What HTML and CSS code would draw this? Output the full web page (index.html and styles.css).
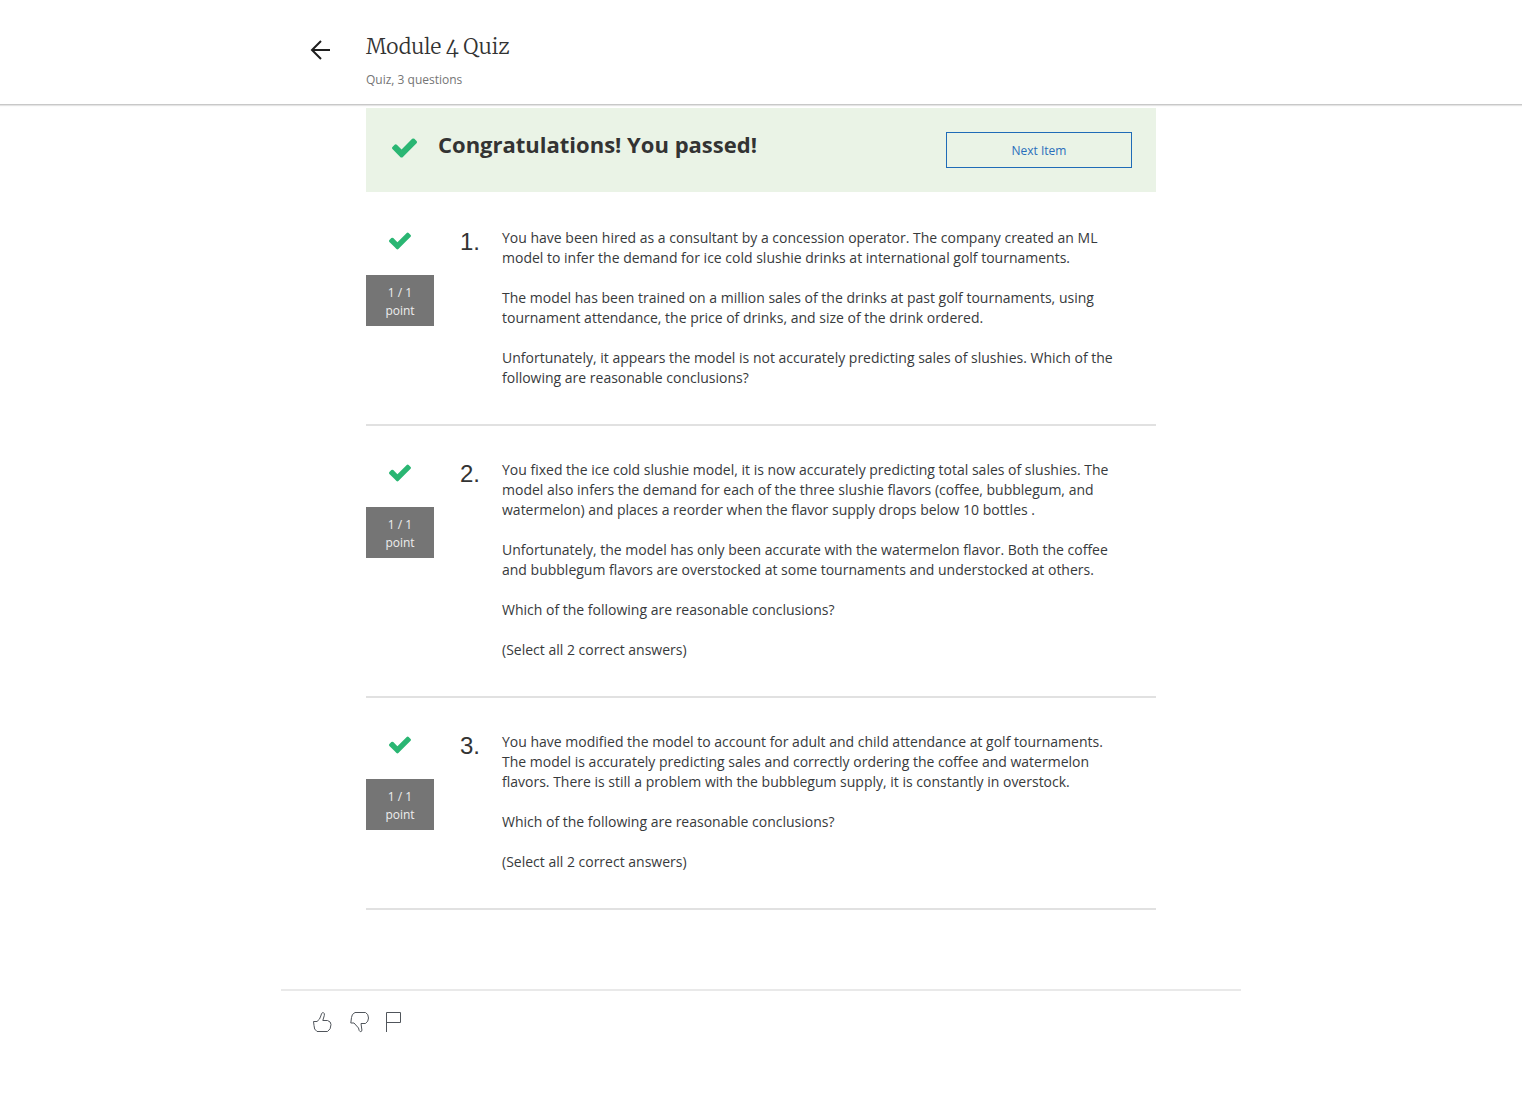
FILE: index.html
```html
<!DOCTYPE html>
<html lang="en">
<head>
<meta charset="utf-8">
<meta name="viewport" content="width=device-width, initial-scale=1">
<title>Module 4 Quiz</title>
<link rel="stylesheet" href="styles.css">
</head>
<body>
<svg width="0" height="0" class="sprite" aria-hidden="true">
  <symbol id="check" viewBox="121 334 1550 1188">
    <path fill="#2ab673" d="M1671 566q0 40-28 68l-724 724-136 136q-28 28-68 28t-68-28l-136-136-362-362q-28-28-28-68t28-68l136-136q28-28 68-28t68 28l294 295 656-657q28-28 68-28t68 28l136 136q28 28 28 68z"/>
  </symbol>
</svg>
<header class="topbar">
  <div class="topbar-inner">
    <a class="back" href="#" aria-label="Back">
      <svg width="20" height="20" viewBox="0 0 20 20" fill="none" stroke="#1f1f1f" stroke-width="2"><path d="M20 10H2M11 1 2 10l9 9"/></svg>
    </a>
    <div>
      <h1 class="title">Module 4 Quiz</h1>
      <p class="subtitle">Quiz, 3 questions</p>
    </div>
  </div>
</header>
<main class="content">
  <section class="banner">
    <svg class="banner-check" aria-hidden="true"><use href="#check"/></svg>
    <h2 class="banner-title">Congratulations! You passed!</h2>
    <button class="next" type="button">Next Item</button>
  </section>

  <article class="question">
    <div class="score">
      <svg class="check" aria-hidden="true"><use href="#check"/></svg>
      <div class="badge">1 / 1<br>point</div>
    </div>
    <div class="number">1.</div>
    <div class="prompt">
      <p>You have been hired as a consultant by a concession operator. The company created an ML model to infer the demand for ice cold slushie drinks at international golf tournaments.</p>
      <p>The model has been trained on a million sales of the drinks at past golf tournaments, using tournament attendance, the price of drinks, and size of the drink ordered.</p>
      <p>Unfortunately, it appears the model is not accurately predicting sales of slushies. Which of the following are reasonable conclusions?</p>
    </div>
  </article>

  <article class="question">
    <div class="score">
      <svg class="check" aria-hidden="true"><use href="#check"/></svg>
      <div class="badge">1 / 1<br>point</div>
    </div>
    <div class="number">2.</div>
    <div class="prompt">
      <p>You fixed the ice cold slushie model, it is now accurately predicting total sales of slushies. The model also infers the demand for each of the three slushie flavors (coffee, bubblegum, and watermelon) and places a reorder when the flavor supply drops below 10 bottles .</p>
      <p>Unfortunately, the model has only been accurate with the watermelon flavor. Both the coffee and bubblegum flavors are overstocked at some tournaments and understocked at others.</p>
      <p>Which of the following are reasonable conclusions?</p>
      <p>(Select all 2 correct answers)</p>
    </div>
  </article>

  <article class="question">
    <div class="score">
      <svg class="check" aria-hidden="true"><use href="#check"/></svg>
      <div class="badge">1 / 1<br>point</div>
    </div>
    <div class="number">3.</div>
    <div class="prompt">
      <p>You have modified the model to account for adult and child attendance at golf tournaments. The model is accurately predicting sales and correctly ordering the coffee and watermelon flavors. There is still a problem with the bubblegum supply, it is constantly in overstock.</p>
      <p>Which of the following are reasonable conclusions?</p>
      <p>(Select all 2 correct answers)</p>
    </div>
  </article>
</main>
<footer class="feedback">
  <button class="icon-button" type="button" aria-label="Like">
    <svg width="20" height="22" viewBox="0 0 20 22"><path d="M1.500 10.500H5Q8 8.500 8.800 5L9.500 2.800Q10.200 1.200 11.500 1.700 12.800 2.300 12.300 4.500L10.800 9.500H15.500Q19 10.500 19 13.500 19 18.500 15.500 20.500H5Q1.800 18.500 2 14.500Z"/></svg>
  </button>
  <button class="icon-button" type="button" aria-label="Dislike">
    <svg width="20" height="22" viewBox="0 0 20 22"><path d="M1.800 12H5L9.500 17 10.200 19.500Q11.200 21.500 12.500 20.300 13.300 19.500 12.600 17L12 12.500H16.500Q19.500 10.500 19.500 7 19.500 3 16.500 1.500H6Q2.600 3 2.500 6.500Z"/></svg>
  </button>
  <button class="icon-button" type="button" aria-label="Flag">
    <svg width="20" height="22" viewBox="0 0 20 22"><path d="M.5 21V1.500H14.500V11.500H.5"/></svg>
  </button>
</footer>
</body>
</html>
```
FILE: styles.css
```css
* { box-sizing: border-box; }

body {
  margin: 0;
  background: #fff;
  color: #373a3c;
  font: 14px/20px "Open Sans", sans-serif;
}

h1, h2, p { margin: 0; }

.sprite { position: absolute; }

.topbar {
  padding: 33px 24px 15px;
  border-bottom: 1px solid #c8c8c8;
  box-shadow: 0 1px 1px #e4e4e4;
}

.topbar-inner {
  display: flex;
  gap: 36px;
  max-width: 902px;
  margin: 0 auto;
}

.back {
  display: block;
  width: 20px;
  height: 20px;
  margin-top: 7px;
}

.back svg { display: block; }

.title {
  color: #333;
  font: 300 21px/28px Merriweather, "Liberation Serif", serif;
  font-variant-numeric: oldstyle-nums;
}

.subtitle {
  margin-top: 10px;
  color: #757575;
  font-size: 12px;
  line-height: 18px;
}

.content {
  max-width: 790px;
  margin: 3px auto 0;
}

.banner {
  display: flex;
  align-items: flex-start;
  padding: 24px;
  background: #eaf3e6;
}

.banner-check {
  width: 25px;
  height: 20px;
  margin: 6px 1px 0 2px;
}

.banner-title {
  flex: 1;
  margin-left: 20px;
  color: #333;
  font-size: 22px;
  font-weight: 700;
  line-height: 24px;
}

.next {
  width: 186px;
  height: 36px;
  padding: 2px 0 0;
  border: 1px solid #1f6bb7;
  background: transparent;
  color: #2a6ebb;
  font: 12px/18px "Open Sans", sans-serif;
}

.question {
  display: flex;
  padding: 34px 34px 36px 0;
  border-bottom: 2px solid #e1e1e1;
}

.banner + .question { padding-top: 36px; }

.score {
  width: 68px;
  text-align: center;
}

.check {
  display: block;
  width: 22px;
  height: 18px;
  margin: 4px auto 25px;
}

.badge {
  padding: 9px 0 6px;
  background: #757575;
  color: #eee;
  font-size: 12px;
  line-height: 18px;
}

.number {
  width: 46px;
  color: #333;
  font: 24px/28px "Liberation Sans", Arial, sans-serif;
  text-align: right;
}

.prompt {
  flex: 1;
  margin-left: 22px;
}

.prompt p + p { margin-top: 20px; }

.feedback {
  display: flex;
  gap: 17px;
  max-width: 960px;
  margin: 79px auto 0;
  padding: 20px 31px 84px;
  border-top: 2px solid #e9e9e9;
}

.icon-button {
  padding: 0;
  border: 0;
  background: none;
}

.icon-button svg {
  display: block;
  fill: none;
  stroke: #50555b;
  stroke-width: 1;
}
```
